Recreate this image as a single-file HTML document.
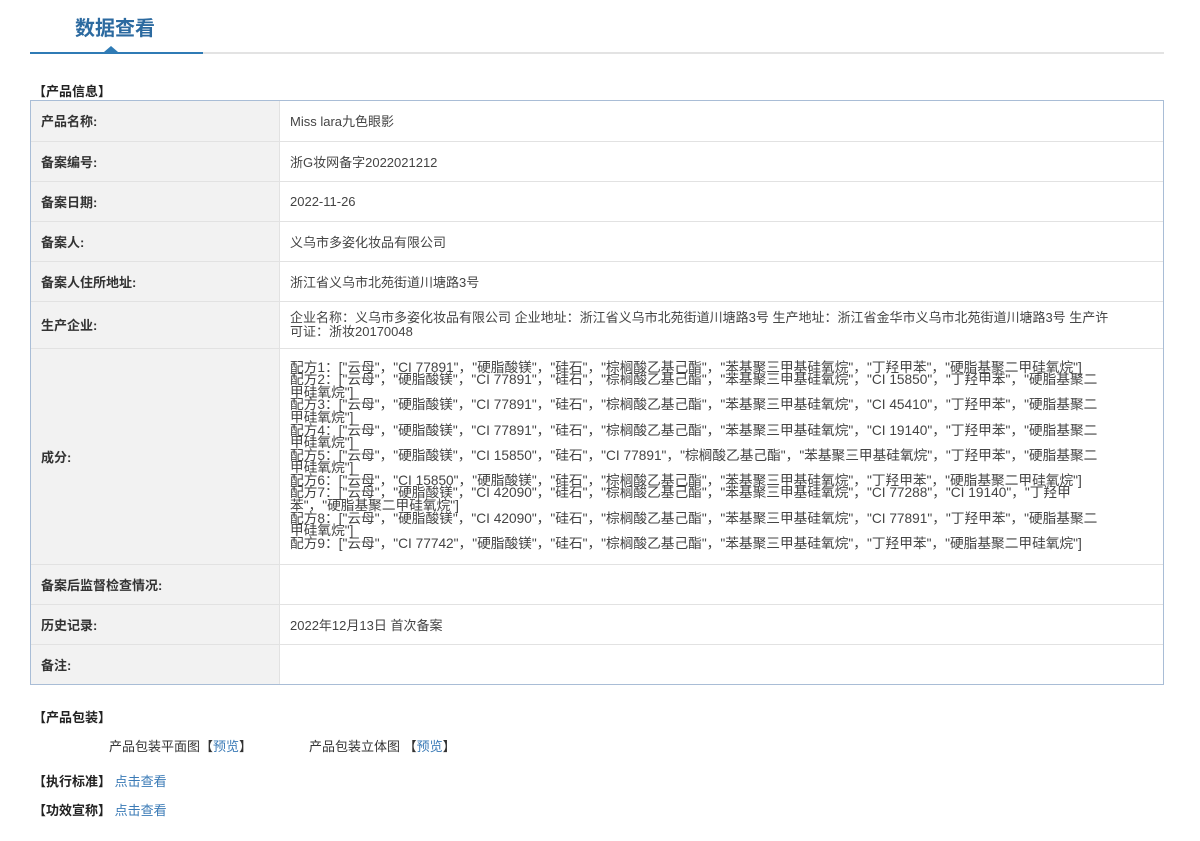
<!DOCTYPE html>
<html><head><meta charset="utf-8"><style>
body{margin:0;background:#fff;font-family:"Liberation Sans","Microsoft YaHei","Noto Sans CJK SC",sans-serif;font-size:13px;color:#333;}
.title{position:absolute;left:75px;top:12px;font-size:20px;font-weight:bold;color:#2c6aa0;}
.line{position:absolute;left:30px;top:52px;width:1134px;height:2px;background:#e3e3e3;}
.line2{position:absolute;left:30px;top:52px;width:173px;height:2px;background:#2f7bb5;}
.tri{position:absolute;left:104px;top:46px;width:0;height:0;border-left:7px solid transparent;border-right:7px solid transparent;border-bottom:6px solid #2f7bb5;}
.h{position:absolute;left:33px;font-weight:bold;color:#222;font-size:13px;}
.wrap{position:absolute;left:30px;top:100px;width:1132px;border:1px solid #a9bdd6;}
table{width:100%;border-collapse:collapse;}
td{border-bottom:1px solid #e2e2e2;padding:0 10px;vertical-align:middle;}
tr:last-child td{border-bottom:none;}
td.l{width:228px;background:#f2f2f2;font-weight:bold;color:#333;border-right:1px solid #e2e2e2;}
td.v{color:#444;}
.ing{font-size:13.7px;line-height:12.6px;padding-right:55px;}
a{color:#3a7ab6;text-decoration:none;}
.p{position:absolute;font-size:13px;color:#333;}
</style></head><body>
<div class="title">数据查看</div>
<div class="line"></div><div class="line2"></div><div class="tri"></div>
<div class="h" style="top:81px">【产品信息】</div>
<div class="wrap"><table>
<tr style="height:40px"><td class="l">产品名称:</td><td class="v">Miss lara九色眼影</td></tr>
<tr style="height:40px"><td class="l">备案编号:</td><td class="v">浙G妆网备字2022021212</td></tr>
<tr style="height:40px"><td class="l">备案日期:</td><td class="v">2022-11-26</td></tr>
<tr style="height:40px"><td class="l">备案人:</td><td class="v">义乌市多姿化妆品有限公司</td></tr>
<tr style="height:40px"><td class="l">备案人住所地址:</td><td class="v">浙江省义乌市北苑街道川塘路3号</td></tr>
<tr style="height:47px"><td class="l">生产企业:</td><td class="v" style="line-height:14px;padding-right:50px">企业名称：义乌市多姿化妆品有限公司 企业地址：浙江省义乌市北苑街道川塘路3号 生产地址：浙江省金华市义乌市北苑街道川塘路3号 生产许可证：浙妆20170048</td></tr>
<tr style="height:216px"><td class="l">成分:</td><td class="v ing">配方1：["云母"，"CI 77891"，"硬脂酸镁"，"硅石"，"棕榈酸乙基己酯"，"苯基聚三甲基硅氧烷"，"丁羟甲苯"，"硬脂基聚二甲硅氧烷"]<br>配方2：["云母"，"硬脂酸镁"，"CI 77891"，"硅石"，"棕榈酸乙基己酯"，"苯基聚三甲基硅氧烷"，"CI 15850"，"丁羟甲苯"，"硬脂基聚二甲硅氧烷"]<br>配方3：["云母"，"硬脂酸镁"，"CI 77891"，"硅石"，"棕榈酸乙基己酯"，"苯基聚三甲基硅氧烷"，"CI 45410"，"丁羟甲苯"，"硬脂基聚二甲硅氧烷"]<br>配方4：["云母"，"硬脂酸镁"，"CI 77891"，"硅石"，"棕榈酸乙基己酯"，"苯基聚三甲基硅氧烷"，"CI 19140"，"丁羟甲苯"，"硬脂基聚二甲硅氧烷"]<br>配方5：["云母"，"硬脂酸镁"，"CI 15850"，"硅石"，"CI 77891"，"棕榈酸乙基己酯"，"苯基聚三甲基硅氧烷"，"丁羟甲苯"，"硬脂基聚二甲硅氧烷"]<br>配方6：["云母"，"CI 15850"，"硬脂酸镁"，"硅石"，"棕榈酸乙基己酯"，"苯基聚三甲基硅氧烷"，"丁羟甲苯"，"硬脂基聚二甲硅氧烷"]<br>配方7：["云母"，"硬脂酸镁"，"CI 42090"，"硅石"，"棕榈酸乙基己酯"，"苯基聚三甲基硅氧烷"，"CI 77288"，"CI 19140"，"丁羟甲苯"，"硬脂基聚二甲硅氧烷"]<br>配方8：["云母"，"硬脂酸镁"，"CI 42090"，"硅石"，"棕榈酸乙基己酯"，"苯基聚三甲基硅氧烷"，"CI 77891"，"丁羟甲苯"，"硬脂基聚二甲硅氧烷"]<br>配方9：["云母"，"CI 77742"，"硬脂酸镁"，"硅石"，"棕榈酸乙基己酯"，"苯基聚三甲基硅氧烷"，"丁羟甲苯"，"硬脂基聚二甲硅氧烷"]</td></tr>
<tr style="height:40px"><td class="l">备案后监督检查情况:</td><td class="v"></td></tr>
<tr style="height:40px"><td class="l">历史记录:</td><td class="v">2022年12月13日 首次备案</td></tr>
<tr style="height:40px"><td class="l">备注:</td><td class="v"></td></tr>
</table></div>
<div class="h" style="top:707px">【产品包装】</div>
<div class="p" style="left:109px;top:736px">产品包装平面图【<a>预览</a>】</div>
<div class="p" style="left:309px;top:736px">产品包装立体图 【<a>预览</a>】</div>
<div class="h" style="top:771px">【执行标准】 <a style="font-weight:normal">点击查看</a></div>
<div class="h" style="top:800px">【功效宣称】 <a style="font-weight:normal">点击查看</a></div>
</body></html>
